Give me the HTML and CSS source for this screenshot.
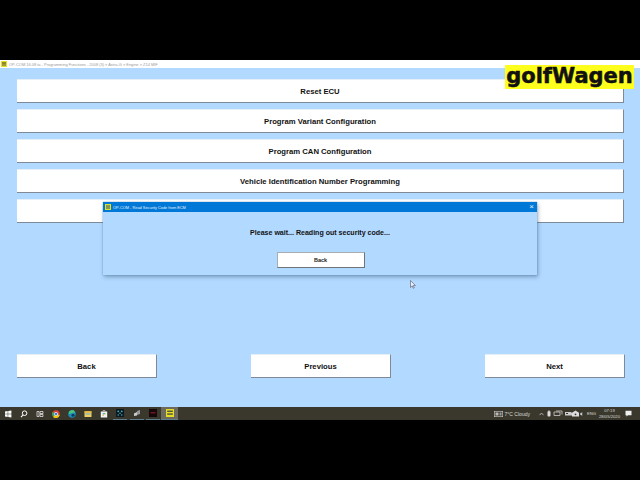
FILE: index.html
```html
<!DOCTYPE html>
<html lang="en">
<head>
<meta charset="utf-8">
<title>OP-COM</title>
<link rel="stylesheet" href="styles.css">
</head>
<body>
<div class="letterbox"></div>
<main class="screen">
  <header class="titlebar">
    <svg class="app-icon" viewBox="0 0 6 6"><rect width="6" height="6" fill="#e8e020"/><rect x="1" y="1.5" width="4" height="1" fill="#333"/><rect x="1" y="3.5" width="4" height="1" fill="#555"/></svg>
    <span class="title-text">OP-COM 16.08 ta - Programming Functions - 2008 (3) &gt; Astra-G &gt; Engine &gt; Z14 MIF</span>
  </header>
  <section class="app">
    <div class="list">
      <div class="btn">Reset ECU</div>
      <div class="btn">Program Variant Configuration</div>
      <div class="btn">Program CAN Configuration</div>
      <div class="btn">Vehicle Identification Number Programming</div>
      <div class="btn"></div>
    </div>
    <div class="nav">
      <div class="btn nav-btn">Back</div>
      <div class="btn nav-btn">Previous</div>
      <div class="btn nav-btn">Next</div>
    </div>
  </section>
  <footer class="taskbar">
    <div class="tb-left">
      <svg class="ti" viewBox="0 0 8 8"><path d="M1 1.4 3.7 1v2.8H1zM4.2.9 7.4.5v3.3H4.2zM1 4.3h2.7V7L1 6.6zM4.2 4.3h3.2v3.2L4.2 7.1z" fill="#fff"/></svg>
      <svg class="ti s1" viewBox="0 0 8 8"><circle cx="4.6" cy="3.2" r="2.3" fill="none" stroke="#fff" stroke-width="1"/><path d="M3 5 1 7.2" stroke="#fff" stroke-width="1.1"/></svg>
      <svg class="ti s2" viewBox="0 0 8 8"><path d="M1 1.5h2v5H1zM4 1.5h3v2H4zM4 4.5h3v2H4z" fill="none" stroke="#ddd" stroke-width=".8"/></svg>
      <svg class="ti s3" viewBox="0 0 8 8"><circle cx="4" cy="4" r="3.8" fill="#e0402f"/><path d="M4 4 7.7 5 4 7.9A4 4 0 0 1 .5 2z" fill="#3aa655"/><path d="M4 4 1 7A4 4 0 0 0 7.7 5z" fill="#f4c20d"/><circle cx="4" cy="4" r="1.7" fill="#3b7de0" stroke="#fff" stroke-width=".6"/></svg>
      <svg class="ti s2" viewBox="0 0 8 8"><circle cx="4" cy="4" r="3.8" fill="#1a8bb8"/><path d="M1 4a3 3 0 0 1 6-1.5L4 3z" fill="#4bc47a"/><circle cx="5" cy="5.2" r="1.5" fill="#123a5a"/></svg>
      <svg class="ti s3" viewBox="0 0 8 8"><rect x=".5" y="1.2" width="7" height="5.8" fill="#f0cf62"/><rect x=".5" y="1.2" width="7" height="1.4" fill="#e2b23a"/><rect x="1.5" y="3.5" width="5" height="1" fill="#5aa7dc"/></svg>
      <svg class="ti s3" viewBox="0 0 8 8"><rect x=".8" y="1.5" width="6.4" height="6" fill="#f4f4f4"/><path d="M2.7 1.5a1.3 1.3 0 0 1 2.6 0" fill="none" stroke="#f4f4f4" stroke-width=".6"/><rect x="2.6" y="3" width="1.3" height="1.3" fill="#40a4d8"/><rect x="4.1" y="3" width="1.3" height="1.3" fill="#63b04a"/><rect x="2.6" y="4.5" width="1.3" height="1.3" fill="#e0b030"/></svg>
      <span class="running r1"><svg class="ti" viewBox="0 0 8 8"><rect width="8" height="8" fill="#0c1a20"/><circle cx="2.2" cy="2.4" r=".8" fill="#48b8d0"/><circle cx="5.8" cy="2.4" r=".8" fill="#48b8d0"/><circle cx="4" cy="4.2" r=".7" fill="#48b8d0"/><circle cx="2.2" cy="6" r=".7" fill="#48b8d0"/><circle cx="5.8" cy="6" r=".7" fill="#48b8d0"/></svg></span>
      <span class="running r2"><svg class="ti" viewBox="0 0 8 8"><path d="M1 4.5 4 3v3.5L1 7z" fill="#ccc"/><path d="M4 2 7 1v4L4 6z" fill="#999"/></svg></span>
      <span class="running r3"><svg class="ti" viewBox="0 0 8 8"><rect width="8" height="8" fill="#14080a"/><rect x="1.5" y="3.4" width="5" height=".9" fill="#b02030"/></svg></span>
      <span class="running active"><svg class="ti" viewBox="0 0 8 8"><rect width="8" height="8" fill="#e4dc28"/><rect x="1.2" y="1.6" width="5.6" height="1.3" fill="#444"/><rect x="1.2" y="4.4" width="5.6" height="1.3" fill="#444"/></svg></span>
    </div>
    <div class="tb-right">
      <svg class="weather" viewBox="0 0 9 6"><rect x=".3" y=".3" width="8.4" height="5.4" fill="none" stroke="#ccc" stroke-width=".6"/><rect x="1.5" y="1.5" width="3" height="3" fill="#bbb"/><rect x="5.5" y="1.5" width="2" height="3" fill="#999"/></svg>
      <span class="temp">7°C Cloudy</span>
      <svg class="chev" viewBox="0 0 5 4"><path d="M.5 3.2 2.5 1l2 2.2" fill="none" stroke="#ddd" stroke-width=".7"/></svg>
      <svg class="tray" viewBox="0 0 37 7">
        <rect x="1.5" y="1" width="3" height="5.5" rx="1" fill="#ddd"/><rect x="2.3" y=".2" width="1.4" height="1.2" fill="#999"/>
        <path d="M8 2h6v3.5H8zM10 1h6v3.5" fill="none" stroke="#ccc" stroke-width=".8"/>
        <path d="M19 2h6l1 1v2.5h-7z" fill="#ccc"/><rect x="20" y="3" width="2" height="1" fill="#3a382c"/>
        <path d="M29.5 .5 33 2.8v3.7h-7V2.8z" fill="#ddd"/><circle cx="29.5" cy="4.3" r=".9" fill="#3a382c"/>
        <path d="M34.3 3h.9l1-1v4l-1-1h-.9z" fill="#ccc"/>
      </svg>
      <span class="lang">ENG</span>
      <span class="clock"><span>07:19</span><span>28/05/2020</span></span>
      <svg class="notif" viewBox="0 0 7 7"><path d="M.5.8h6v4.4H3L1.5 6.4V5.2h-1z" fill="#eee"/></svg>
    </div>
  </footer>
</main>
<div class="letterbox bottom"></div>

<aside class="logo">golfWagen</aside>

<div class="dialog">
  <div class="dialog-bar">
    <svg class="dialog-icon" viewBox="0 0 6 6"><rect width="6" height="6" fill="#dfe02a"/><rect x="1" y="1.5" width="4" height="1" fill="#356"/><rect x="1" y="3.5" width="4" height="1" fill="#356"/></svg>
    <span class="dialog-title">OP-COM - Read Security Code from ECM</span>
    <span class="dialog-close">×</span>
  </div>
  <div class="dialog-body">
    <p class="dialog-msg">Please wait... Reading out security code...</p>
    <div class="dialog-btn">Back</div>
  </div>
</div>

<svg class="cursor" viewBox="0 0 6 9"><path d="M.5.5v7l1.7-1.6 1.1 2.4 1-.5-1.1-2.3h2.2z" fill="#e8f0f8" stroke="#556" stroke-width=".6"/></svg>
</body>
</html>
```
FILE: styles.css
```css
* { box-sizing: border-box; }
html, body { margin: 0; padding: 0; background: #000; }
body {
  width: 640px; height: 480px; overflow: hidden; position: relative;
  display: flex; flex-direction: column;
  font-family: "Liberation Sans", Arial, sans-serif;
}
.letterbox { height: 60px; background: #000; flex: none; }
.screen { height: 360px; flex: none; display: flex; flex-direction: column; }

.titlebar {
  height: 8px; background: #fff; flex: none;
  display: flex; align-items: center; gap: 2px; padding-left: 1px;
}
.app-icon { width: 6px; height: 6px; }
.title-text { font-size: 3.95px; color: #9a9a9a; white-space: nowrap; }

.app {
  flex: 1; background: #b2d9ff;
  display: flex; flex-direction: column; justify-content: space-between;
  padding: 11px 16px 29px 17px;
}
.list { display: flex; flex-direction: column; gap: 6px; }
.btn {
  height: 24px; background: #fff;
  border-right: 1px solid #7f8a96; border-bottom: 1px solid #7f8a96;
  border-top: 1px solid #e6eff8;
  display: flex; align-items: center; justify-content: center;
  font-size: 7.7px; font-weight: bold; color: #111;
}
.nav { display: flex; justify-content: space-between; margin-right: -1px; }
.nav-btn { width: 140px; }

.taskbar {
  height: 13px; flex: none; background: #3a382c;
  display: flex; justify-content: space-between; align-items: center;
}
.tb-left { display: flex; align-items: center; padding-left: 4px; }
.ti { width: 8px; height: 8px; display: block; flex: none; }
.s1 { margin-left: 8px; }
.s2 { margin-left: 8px; }
.s3 { margin-left: 8px; }
.running {
  width: 14px; height: 13px;
  display: flex; align-items: center; justify-content: center;
  border-bottom: 1px solid #5d7f90;
}
.r1 { margin-left: 5px; }
.r2 { margin-left: 3px; }
.r3 { margin-left: 2px; }
.running.active { background: #6c6a5c; margin-left: 1px; width: 17px; }
.tb-right { display: flex; align-items: center; color: #d8d8d8; font-size: 5px; white-space: nowrap; padding-right: 8px; }
.weather { width: 9px; height: 6px; }
.temp { margin-left: 2px; }
.chev { width: 5px; height: 4px; margin-left: 9px; }
.tray { width: 37px; height: 7px; margin-left: 2px; }
.lang { margin-left: 4px; font-size: 4.2px; }
.clock { display: flex; flex-direction: column; align-items: center; margin-left: 3px; font-size: 4.2px; line-height: 5.5px; }
.notif { width: 7px; height: 7px; margin-left: 5px; }

.logo {
  position: absolute; left: 505px; top: 65px; width: 129px; height: 24px;
  background: #ffff1e; color: #111;
  font-family: "DejaVu Sans", sans-serif;
  font-size: 21px; font-weight: bold; line-height: 22px; text-align: center;
  -webkit-text-stroke: .5px #111;
  white-space: nowrap;
}

.dialog {
  position: absolute; left: 103px; top: 202px; width: 434px; height: 73px;
  background: #b2d9ff;
  box-shadow: 0 0 1px #4c88b0, 1px 2px 4px rgba(50, 80, 110, .45);
  display: flex; flex-direction: column;
}
.dialog-bar {
  height: 10px; background: #0078d7; flex: none;
  display: flex; align-items: center; padding: 0 3px 0 2px; color: #e6f2fb;
}
.dialog-icon { width: 6px; height: 6px; }
.dialog-title { font-size: 3.9px; margin-left: 2px; white-space: nowrap; }
.dialog-close { margin-left: auto; font-size: 8px; line-height: 10px; }
.dialog-body { flex: 1; display: flex; flex-direction: column; align-items: center; padding-top: 16px; }
.dialog-msg { margin: 0; font-size: 7.05px; font-weight: bold; line-height: 9px; color: #111; }
.dialog-btn {
  margin-top: 15px; margin-left: 1px; width: 88px; height: 16px; background: #fff;
  border: 1px solid #a8adb4; border-right-color: #70757a; border-bottom-color: #70757a;
  display: flex; align-items: center; justify-content: center;
  font-size: 5.5px; font-weight: bold; color: #222;
}
.cursor { position: absolute; left: 410px; top: 280px; width: 6px; height: 9px; }
```
